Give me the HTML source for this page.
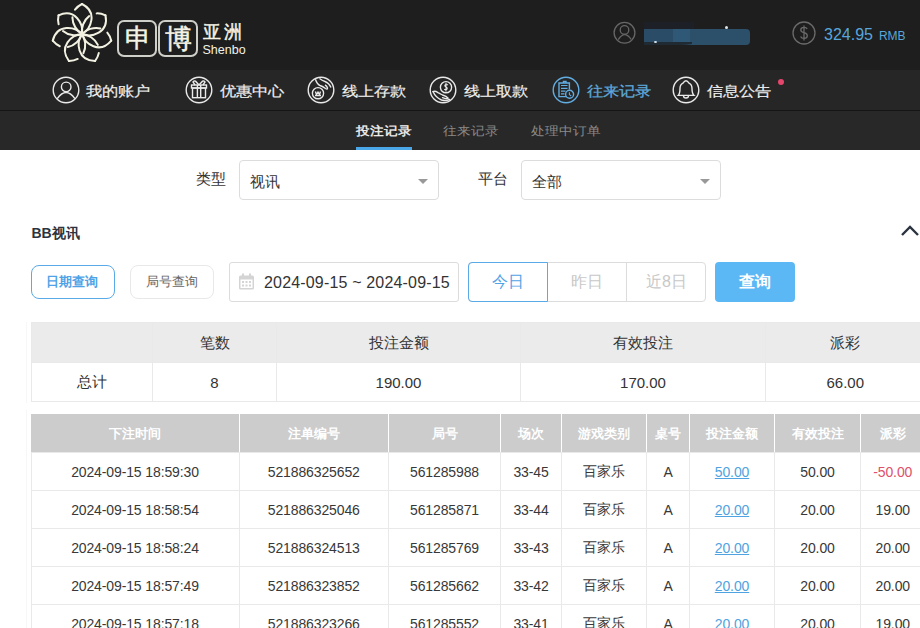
<!DOCTYPE html>
<html><head><meta charset="utf-8">
<style>
*{margin:0;padding:0;box-sizing:border-box}
html,body{width:920px;height:628px;overflow:hidden;background:#fff;font-family:"Liberation Sans",sans-serif;color:#333}
.a{position:absolute;white-space:nowrap}
#top{position:absolute;left:0;top:0;width:920px;height:70px;background:#1e1e1e}
#nav{position:absolute;left:0;top:70px;width:920px;height:40px;background:#262626}
#navline{position:absolute;left:0;top:110px;width:920px;height:1px;background:#141414}
#sub{position:absolute;left:0;top:111px;width:920px;height:39px;background:#282828}
.nt{font-size:16px;font-weight:normal;-webkit-text-stroke:0.2px #f0f0f0;color:#f0f0f0;top:84px;line-height:18px;transform:scaleY(0.86);transform-origin:0 0}
.ic{position:absolute;top:76px;width:28px;height:28px}
.st{font-size:14px;top:124px;line-height:16px;color:#8a8a8a;transform:scaleY(0.88);transform-origin:0 0}
.lbl{font-size:15px;color:#333;line-height:17px}
.sel{position:absolute;top:160px;width:200px;height:40px;border:1px solid #dcdcdc;border-radius:4px;background:#fff}
.sel span{position:absolute;left:10px;top:12px;font-size:15px;color:#333;line-height:17px}
.sel i{position:absolute;right:10px;top:18px;width:0;height:0;border-left:5px solid transparent;border-right:5px solid transparent;border-top:5px solid #999}
table{border-collapse:collapse;position:absolute;table-layout:fixed}
#sum td{border:1px solid #e4e4e4;text-align:center;font-size:15px;color:#333}
#det td{border:1px solid #e4e4e4;text-align:center;font-size:14px;color:#333;height:38px}
#det tr.h td{background:#cccccc;color:#fff;font-weight:bold;font-size:13px;border-color:#cccccc;border-left:1px solid #fff;border-right:1px solid #fff}
.lk{color:#4fa3e0;text-decoration:underline}
.neg{color:#e0506a}
.hl{height:1px;background:#e9e9e9}
.vl{width:1px;background:#e9e9e9}
.sc{font-size:15px;color:#333;display:flex;align-items:center;justify-content:center;padding-top:2px}
.dhc{font-size:13px;color:#fff;font-weight:bold;display:flex;align-items:center;justify-content:center;padding-top:2px}
.dc{font-size:14px;color:#383838;display:flex;align-items:center;justify-content:center;padding-top:1px;letter-spacing:-0.12px}
</style></head><body>
<div id="top"></div>
<div id="nav"></div>
<div id="navline"></div>
<div id="sub"></div>

<!-- logo -->
<svg class="a" style="left:50px;top:3px" width="64" height="64" viewBox="-32 -31 64 64">
<g fill="none" stroke="#f3f2e2" stroke-width="2" stroke-linecap="round">
<g id="pet"><path d="M0 0 C9 -5 16 -22 0 -30"/><path pathLength="100" stroke-dasharray="24 22 100" d="M0 -30 C-16 -22 -9 -5 0 0"/></g>
<use href="#pet" transform="rotate(51.43)"/>
<use href="#pet" transform="rotate(102.86)"/>
<use href="#pet" transform="rotate(154.29)"/>
<use href="#pet" transform="rotate(205.71)"/>
<use href="#pet" transform="rotate(257.14)"/>
<use href="#pet" transform="rotate(308.57)"/>
</g></svg>
<div class="a" style="left:117px;top:20px;width:40px;height:37px;border:2px solid #cfcfca;border-radius:7px"></div>
<div class="a" style="left:158px;top:20px;width:40px;height:37px;border:2px solid #cfcfca;border-radius:7px"></div>
<div class="a" style="left:125px;top:23px;font-size:26px;line-height:30px;color:#f4f2e4;-webkit-text-stroke:0.5px #f4f2e4">申</div>
<div class="a" style="left:165px;top:24px;font-size:27px;line-height:30px;color:#f4f2e4;-webkit-text-stroke:0.5px #f4f2e4">博</div>
<div class="a" style="left:203px;top:22px;font-size:17.5px;line-height:20px;color:#f4f2e4;-webkit-text-stroke:0.45px #f4f2e4;letter-spacing:2.5px">亚洲</div>
<div class="a" style="left:202.5px;top:43px;font-size:12.5px;line-height:14px;color:#f4f2e4">Shenbo</div>

<!-- top right -->
<svg class="a" style="left:612px;top:20px" width="25" height="25" viewBox="-12.5 -12.5 25 25">
<g fill="none" stroke="#666" stroke-width="1.3"><circle cx="0" cy="0.3" r="10.4"/><circle cx="0" cy="-2.6" r="4.3"/><path d="M-6.3 7.2 Q0 -3 6.8 7"/></g></svg>
<div class="a" style="left:644px;top:22px;width:50px;height:7px;background:#1d2127"></div>
<div class="a" style="left:644px;top:29px;width:106px;height:15.5px;background:#2c5069;border-radius:1px 4px 4px 1px"></div>
<div class="a" style="left:644px;top:29px;width:29px;height:15.5px;background:#2b4c66"></div>
<div class="a" style="left:673px;top:29px;width:17px;height:15.5px;background:#2f5776"></div>
<div class="a" style="left:644px;top:41.5px;width:48px;height:3px;background:#1f2a33;border-radius:0 0 40% 0"></div>
<div class="a" style="left:724.5px;top:25.5px;width:3px;height:3px;background:#dde6ee;border-radius:50%"></div>
<div class="a" style="left:654px;top:41px;width:3px;height:2px;background:#dde6ee;border-radius:50%"></div>
<svg class="a" style="left:791px;top:20px" width="26" height="26" viewBox="-13 -13 26 26">
<g fill="none" stroke="#6a6a6a" stroke-width="1.3"><circle r="11"/><path d="M3.2 -4 Q2.4 -5.6 0 -5.6 Q-3.2 -5.6 -3.2 -3 Q-3.2 -1 0 -0.3 Q3.3 0.4 3.3 2.8 Q3.3 5.4 0 5.4 Q-2.6 5.4 -3.4 3.5 M0 -7.6 V7.6"/></g></svg>
<div class="a" style="left:824px;top:25.5px;font-size:16px;line-height:18px;color:#58a6dc">324.95 <span style="font-size:12px;margin-left:1.5px">RMB</span></div>

<!-- nav -->
<svg class="ic" style="left:52px" viewBox="-14 -14 28 28"><g fill="none" stroke="#eaeaea" stroke-width="1.4"><circle r="12.8"/><circle cx="0.2" cy="-3.1" r="4.8"/><path d="M-8.7 8.6 Q0 -3.5 8.9 8.6"/></g></svg>
<div class="a nt" style="left:86px">我的账户</div>

<svg class="ic" style="left:185px" viewBox="-14 -14 28 28"><g fill="none" stroke="#eaeaea" stroke-width="1.4"><circle r="12.8"/>
<rect x="-7.5" y="-5" width="15" height="3"/><rect x="-6.5" y="-2" width="13" height="9.7"/><path d="M-1.6 -5 V7.7 M1.7 -5 V7.7"/><path d="M0 -5 L-3.5 -8.8 Q-5.5 -9.5 -6 -8 L-4 -5 M0 -5 L3.5 -8.8 Q5.5 -9.5 6 -8 L4 -5"/></g></svg>
<div class="a nt" style="left:220px">优惠中心</div>

<svg class="ic" style="left:307px" viewBox="-14 -14 28 28"><g fill="none" stroke="#eaeaea" stroke-width="1.4"><circle r="12.8"/>
<circle cx="-3" cy="3.2" r="5.6"/><path d="M-5.6 1.5 L-4.5 4.5 L-3 2 L-1.5 4.5 L-0.5 1.5 M-6 5.5 H0"/>
<path d="M-5.6 -10.8 Q-4 -6 -1 -4.5 Q2 -3.5 4.5 -1.5 Q6.5 0 6.5 -2 Q6 -4 4 -5 M-1.5 -11.5 Q1 -9.5 4 -8.5 Q8 -7 10 -2.5"/></g></svg>
<div class="a nt" style="left:342px">线上存款</div>

<svg class="ic" style="left:429px" viewBox="-14 -14 28 28"><g fill="none" stroke="#eaeaea" stroke-width="1.4" stroke-linecap="round" stroke-linejoin="round"><circle r="12.8"/>
<circle cx="3" cy="-2.8" r="5.6"/>
<path d="M-10 1.6 Q-7.5 7.5 -1.5 10 Q2.5 11.2 6.5 9.5"/><path d="M-10 1.6 Q-8 0.6 -5 2.6 L-0.5 5 Q3.5 6.3 5.2 8.2 Q3.5 9.2 -0.5 7.6"/>
<path d="M4.6 -5.2 Q3.4 -5.8 2.2 -5.2 Q1.2 -4.2 2.8 -3.2 Q4.6 -2.3 4.2 -1.2 Q3.2 0 1.6 -0.6 M3 -6.8 V1.1" stroke-width="1.1"/></g></svg>
<div class="a nt" style="left:464px">线上取款</div>

<svg class="ic" style="left:552px" viewBox="-14 -14 28 28"><g fill="none" stroke="#62ade2" stroke-width="1.4"><circle r="12.8"/>
<path d="M0.5 6.6 H-7 V-7 H3.4 V-0.5"/><path d="M-5 -4.5 H1.5 M-5 -1.7 H1.5 M-5 1.1 H-0.5 M-5 3.9 H-1.5" stroke-width="1.2"/><path d="M-2.5 -7 V-8.5 H0 V-7"/>
<circle cx="3.6" cy="4.3" r="4"/><path d="M3.4 2.3 V4.6 L5.2 6" stroke-width="1.1"/></g></svg>
<div class="a nt" style="left:587px;color:#5ea9dd;-webkit-text-stroke:0.3px #5ea9dd">往来记录</div>

<svg class="ic" style="left:672px" viewBox="-14 -14 28 28"><g fill="none" stroke="#eaeaea" stroke-width="1.4"><circle r="12.8"/>
<path d="M-7.8 5.4 H8 Q6 3.5 6 -1.5 Q6 -5.5 3 -6.8 Q1.5 -9.2 0 -9.2 Q-1.5 -9.2 -3 -6.8 Q-6 -5.5 -6 -1.5 Q-6 3.5 -7.8 5.4 Z"/><path d="M-2.5 5.4 Q-2.5 8 0 8 Q2.5 8 2.5 5.4"/></g></svg>
<div class="a nt" style="left:707px">信息公告</div>
<div class="a" style="left:778px;top:79px;width:6px;height:6px;border-radius:50%;background:#e5466c"></div>

<!-- sub tabs -->
<div class="a st" style="left:356px;color:#f4f4f4;-webkit-text-stroke:0.4px #f4f4f4">投注记录</div>
<div class="a st" style="left:443px">往来记录</div>
<div class="a st" style="left:531px">处理中订单</div>
<div class="a" style="left:356px;top:147px;width:56px;height:3px;background:#4aa8e8"></div>

<!-- filters -->
<div class="a lbl" style="left:196px;top:170px">类型</div>
<div class="sel" style="left:239px"><span>视讯</span><i></i></div>
<div class="a lbl" style="left:478px;top:170px">平台</div>
<div class="sel" style="left:521px"><span>全部</span><i></i></div>

<div class="a" style="left:31.5px;top:225px;font-size:14px;line-height:16px;font-weight:bold;color:#2c3440">BB视讯</div>
<svg class="a" style="left:899px;top:223px" width="22" height="16" viewBox="0 0 22 16"><path d="M3 12 L11 4 L19 12" fill="none" stroke="#2a3340" stroke-width="2.4"/></svg>

<div class="a" style="left:31px;top:265px;width:84px;height:34px;border:1px solid #5aaae8;border-radius:8px;font-size:13px;font-weight:bold;color:#4fa3e6;text-align:center;line-height:32px;padding-right:2px">日期查询</div>
<div class="a" style="left:130px;top:265px;width:84px;height:34px;border:1px solid #e8e8e8;border-radius:8px;font-size:13px;color:#666;text-align:center;line-height:32px">局号查询</div>

<div class="a" style="left:229px;top:262px;width:230px;height:40px;border:1px solid #dcdcdc;border-radius:3px"></div>
<svg class="a" style="left:238px;top:273px" width="17" height="17" viewBox="0 0 17 17"><g fill="#d4d4d4"><rect x="1" y="2.5" width="15" height="14" rx="1.5"/></g><g fill="#fff"><rect x="2.5" y="6.5" width="12" height="8.5"/></g><g fill="#d4d4d4"><rect x="4" y="0.5" width="2" height="4"/><rect x="11" y="0.5" width="2" height="4"/><rect x="4" y="8" width="2" height="2"/><rect x="7.5" y="8" width="2" height="2"/><rect x="11" y="8" width="2" height="2"/><rect x="4" y="11.5" width="2" height="2"/><rect x="7.5" y="11.5" width="2" height="2"/><rect x="11" y="11.5" width="2" height="2"/></g></svg>
<div class="a" style="left:264px;top:274px;font-size:16px;line-height:18px;color:#333;letter-spacing:0.17px">2024-09-15 ~ 2024-09-15</div>

<div class="a" style="left:468px;top:262px;width:238px;height:40px;border:1px solid #dcdcdc;border-radius:4px"></div>
<div class="a" style="left:626px;top:262px;width:1px;height:40px;background:#dcdcdc"></div>
<div class="a" style="left:468px;top:262px;width:80px;height:40px;border:1px solid #5aaae8;border-radius:4px 0 0 4px;font-size:16px;color:#4fa3e6;text-align:center;line-height:38px">今日</div>
<div class="a" style="left:548px;top:262px;width:78px;height:40px;font-size:16px;color:#c8c8c8;text-align:center;line-height:40px">昨日</div>
<div class="a" style="left:627px;top:262px;width:79px;height:40px;font-size:16px;color:#c8c8c8;text-align:center;line-height:40px">近8日</div>
<div class="a" style="left:715px;top:262px;width:80px;height:40px;border-radius:4px;background:#5bb8f5;font-size:16px;font-weight:bold;color:#fff;text-align:center;line-height:40px">查询</div>

<!-- summary -->
<div class="a" style="left:26px;top:322px;width:1px;height:81px;background:#f7f7f7"></div>
<div class="a" style="left:26px;top:410px;width:1px;height:218px;background:#f7f7f7"></div>
<div class="a" style="left:31px;top:322.5px;width:894px;height:39.5px;background:#ebebeb"></div>
<div class="a hl" style="left:31px;top:322.0px;width:894px"></div>
<div class="a hl" style="left:31px;top:361.5px;width:894px"></div>
<div class="a hl" style="left:31px;top:400.5px;width:894px"></div>
<div class="a vl" style="left:30.5px;top:322.5px;height:78.5px"></div>
<div class="a vl" style="left:152.0px;top:322.5px;height:78.5px"></div>
<div class="a vl" style="left:276.0px;top:322.5px;height:78.5px"></div>
<div class="a vl" style="left:520.0px;top:322.5px;height:78.5px"></div>
<div class="a vl" style="left:765.0px;top:322.5px;height:78.5px"></div>
<div class="a sc" style="left:31px;top:322.5px;width:121.5px;height:39.5px"></div>
<div class="a sc" style="left:31px;top:362px;width:121.5px;height:39px">总计</div>
<div class="a sc" style="left:152.5px;top:322.5px;width:124.0px;height:39.5px">笔数</div>
<div class="a sc" style="left:152.5px;top:362px;width:124.0px;height:39px">8</div>
<div class="a sc" style="left:276.5px;top:322.5px;width:244.0px;height:39.5px">投注金额</div>
<div class="a sc" style="left:276.5px;top:362px;width:244.0px;height:39px">190.00</div>
<div class="a sc" style="left:520.5px;top:322.5px;width:245.0px;height:39.5px">有效投注</div>
<div class="a sc" style="left:520.5px;top:362px;width:245.0px;height:39px">170.00</div>
<div class="a sc" style="left:765.5px;top:322.5px;width:159.5px;height:39.5px">派彩</div>
<div class="a sc" style="left:765.5px;top:362px;width:159.5px;height:39px">66.00</div>
<!-- detail -->
<div class="a" style="left:31px;top:414px;width:894px;height:38px;background:#cccccc"></div>
<div class="a" style="left:238.5px;top:414px;width:1px;height:38px;background:#fff"></div>
<div class="a" style="left:388.0px;top:414px;width:1px;height:38px;background:#fff"></div>
<div class="a" style="left:500.0px;top:414px;width:1px;height:38px;background:#fff"></div>
<div class="a" style="left:561.0px;top:414px;width:1px;height:38px;background:#fff"></div>
<div class="a" style="left:646.0px;top:414px;width:1px;height:38px;background:#fff"></div>
<div class="a" style="left:689.0px;top:414px;width:1px;height:38px;background:#fff"></div>
<div class="a" style="left:774.0px;top:414px;width:1px;height:38px;background:#fff"></div>
<div class="a" style="left:860.0px;top:414px;width:1px;height:38px;background:#fff"></div>
<div class="a hl" style="left:31px;top:451.5px;width:894px"></div>
<div class="a hl" style="left:31px;top:490.0px;width:894px"></div>
<div class="a hl" style="left:31px;top:528.0px;width:894px"></div>
<div class="a hl" style="left:31px;top:565.5px;width:894px"></div>
<div class="a hl" style="left:31px;top:603.5px;width:894px"></div>
<div class="a hl" style="left:31px;top:641.5px;width:894px"></div>
<div class="a vl" style="left:30.5px;top:452px;height:190px"></div>
<div class="a vl" style="left:238.5px;top:452px;height:190px"></div>
<div class="a vl" style="left:388.0px;top:452px;height:190px"></div>
<div class="a vl" style="left:500.0px;top:452px;height:190px"></div>
<div class="a vl" style="left:561.0px;top:452px;height:190px"></div>
<div class="a vl" style="left:646.0px;top:452px;height:190px"></div>
<div class="a vl" style="left:689.0px;top:452px;height:190px"></div>
<div class="a vl" style="left:774.0px;top:452px;height:190px"></div>
<div class="a vl" style="left:860.0px;top:452px;height:190px"></div>
<div class="a dhc" style="left:31px;top:414px;width:208px;height:38px">下注时间</div>
<div class="a dhc" style="left:239px;top:414px;width:149.5px;height:38px">注单编号</div>
<div class="a dhc" style="left:388.5px;top:414px;width:112.0px;height:38px">局号</div>
<div class="a dhc" style="left:500.5px;top:414px;width:61.0px;height:38px">场次</div>
<div class="a dhc" style="left:561.5px;top:414px;width:85.0px;height:38px">游戏类别</div>
<div class="a dhc" style="left:646.5px;top:414px;width:43.0px;height:38px">桌号</div>
<div class="a dhc" style="left:689.5px;top:414px;width:85.0px;height:38px">投注金额</div>
<div class="a dhc" style="left:774.5px;top:414px;width:86.0px;height:38px">有效投注</div>
<div class="a dhc" style="left:860.5px;top:414px;width:64.5px;height:38px">派彩</div>
<div class="a dc" style="left:31px;top:452px;width:208px;height:38.5px">2024-09-15 18:59:30</div>
<div class="a dc" style="left:239px;top:452px;width:149.5px;height:38.5px">521886325652</div>
<div class="a dc" style="left:388.5px;top:452px;width:112.0px;height:38.5px">561285988</div>
<div class="a dc" style="left:500.5px;top:452px;width:61.0px;height:38.5px">33-45</div>
<div class="a dc" style="left:561.5px;top:452px;width:85.0px;height:38.5px">百家乐</div>
<div class="a dc" style="left:646.5px;top:452px;width:43.0px;height:38.5px">A</div>
<div class="a dc" style="left:689.5px;top:452px;width:85.0px;height:38.5px"><span class="lk">50.00</span></div>
<div class="a dc" style="left:774.5px;top:452px;width:86.0px;height:38.5px">50.00</div>
<div class="a dc" style="left:860.5px;top:452px;width:64.5px;height:38.5px"><span class="neg">-50.00</span></div>
<div class="a dc" style="left:31px;top:490.5px;width:208px;height:38.0px">2024-09-15 18:58:54</div>
<div class="a dc" style="left:239px;top:490.5px;width:149.5px;height:38.0px">521886325046</div>
<div class="a dc" style="left:388.5px;top:490.5px;width:112.0px;height:38.0px">561285871</div>
<div class="a dc" style="left:500.5px;top:490.5px;width:61.0px;height:38.0px">33-44</div>
<div class="a dc" style="left:561.5px;top:490.5px;width:85.0px;height:38.0px">百家乐</div>
<div class="a dc" style="left:646.5px;top:490.5px;width:43.0px;height:38.0px">A</div>
<div class="a dc" style="left:689.5px;top:490.5px;width:85.0px;height:38.0px"><span class="lk">20.00</span></div>
<div class="a dc" style="left:774.5px;top:490.5px;width:86.0px;height:38.0px">20.00</div>
<div class="a dc" style="left:860.5px;top:490.5px;width:64.5px;height:38.0px">19.00</div>
<div class="a dc" style="left:31px;top:528.5px;width:208px;height:37.5px">2024-09-15 18:58:24</div>
<div class="a dc" style="left:239px;top:528.5px;width:149.5px;height:37.5px">521886324513</div>
<div class="a dc" style="left:388.5px;top:528.5px;width:112.0px;height:37.5px">561285769</div>
<div class="a dc" style="left:500.5px;top:528.5px;width:61.0px;height:37.5px">33-43</div>
<div class="a dc" style="left:561.5px;top:528.5px;width:85.0px;height:37.5px">百家乐</div>
<div class="a dc" style="left:646.5px;top:528.5px;width:43.0px;height:37.5px">A</div>
<div class="a dc" style="left:689.5px;top:528.5px;width:85.0px;height:37.5px"><span class="lk">20.00</span></div>
<div class="a dc" style="left:774.5px;top:528.5px;width:86.0px;height:37.5px">20.00</div>
<div class="a dc" style="left:860.5px;top:528.5px;width:64.5px;height:37.5px">20.00</div>
<div class="a dc" style="left:31px;top:566px;width:208px;height:38px">2024-09-15 18:57:49</div>
<div class="a dc" style="left:239px;top:566px;width:149.5px;height:38px">521886323852</div>
<div class="a dc" style="left:388.5px;top:566px;width:112.0px;height:38px">561285662</div>
<div class="a dc" style="left:500.5px;top:566px;width:61.0px;height:38px">33-42</div>
<div class="a dc" style="left:561.5px;top:566px;width:85.0px;height:38px">百家乐</div>
<div class="a dc" style="left:646.5px;top:566px;width:43.0px;height:38px">A</div>
<div class="a dc" style="left:689.5px;top:566px;width:85.0px;height:38px"><span class="lk">20.00</span></div>
<div class="a dc" style="left:774.5px;top:566px;width:86.0px;height:38px">20.00</div>
<div class="a dc" style="left:860.5px;top:566px;width:64.5px;height:38px">20.00</div>
<div class="a dc" style="left:31px;top:604px;width:208px;height:38px">2024-09-15 18:57:18</div>
<div class="a dc" style="left:239px;top:604px;width:149.5px;height:38px">521886323266</div>
<div class="a dc" style="left:388.5px;top:604px;width:112.0px;height:38px">561285552</div>
<div class="a dc" style="left:500.5px;top:604px;width:61.0px;height:38px">33-41</div>
<div class="a dc" style="left:561.5px;top:604px;width:85.0px;height:38px">百家乐</div>
<div class="a dc" style="left:646.5px;top:604px;width:43.0px;height:38px">A</div>
<div class="a dc" style="left:689.5px;top:604px;width:85.0px;height:38px"><span class="lk">20.00</span></div>
<div class="a dc" style="left:774.5px;top:604px;width:86.0px;height:38px">20.00</div>
<div class="a dc" style="left:860.5px;top:604px;width:64.5px;height:38px">19.00</div>
</body></html>
